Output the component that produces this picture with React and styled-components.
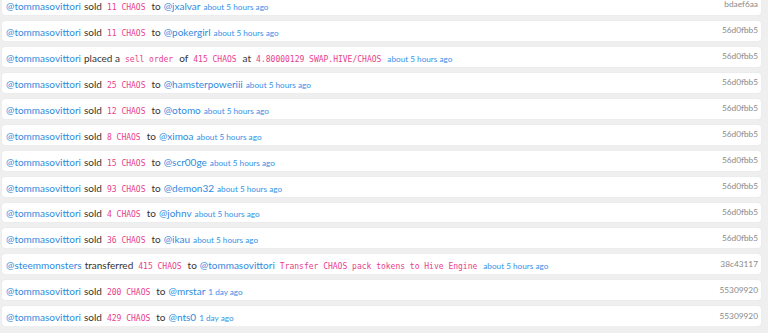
import React from 'react';
import styled, { createGlobalStyle } from 'styled-components';

const GlobalStyle = createGlobalStyle`
    body {
        margin: 0;
        background: #efefef;
        font-family: Lato, "Open Sans", sans-serif;
        overflow: hidden;
    }
`;

const Feed = styled.div`
    display: flex;
    flex-direction: column;
    gap: 6px;
    padding: 0 7px 0 2px;
    margin-top: -5px;
`;

const Card = styled.div`
    background: #fff;
    border-radius: 3px;
    box-shadow: 0 0 1px rgba(0, 0, 0, 0.12);
    height: 19.95px;
    display: flex;
    align-items: center;
    padding: 0 3px 0 4px;
    font-size: 10px;
    color: #333;
    white-space: nowrap;
`;

const Line = styled.div`
    display: flex;
    align-items: baseline;
    margin-top: 2px;
`;

const User = styled.span`
    color: #2f8ae0;
    margin-left: ${p => (p.$first ? '0' : '3px')};
`;

const Word = styled.span`
    margin-left: 3px;
`;

const Code = styled.code`
    font-family: "DejaVu Sans Mono", "Liberation Mono", monospace;
    font-size: 8px;
    color: #e83e8c;
    margin: 0 3px 0 5px;
`;

const Time = styled.span`
    color: #3592e8;
    font-size: 8.2px;
    margin-left: 3px;
`;

const Hash = styled.span`
    margin-left: auto;
    margin-bottom: 1px;
    font-size: 8.3px;
    color: #8a8a8a;
`;

const rows = [
    { from: 'tommasovittori', parts: [['w', 'sold'], ['c', '11 CHAOS'], ['w', 'to'], ['u', 'jxalvar']], time: 'about 5 hours ago', hash: 'bdaef6aa' },
    { from: 'tommasovittori', parts: [['w', 'sold'], ['c', '11 CHAOS'], ['w', 'to'], ['u', 'pokergirl']], time: 'about 5 hours ago', hash: '56d0fbb5' },
    { from: 'tommasovittori', parts: [['w', 'placed a'], ['c', 'sell order'], ['w', 'of'], ['c', '415 CHAOS'], ['w', 'at'], ['c', '4.80000129 SWAP.HIVE/CHAOS']], time: 'about 5 hours ago', hash: '56d0fbb5' },
    { from: 'tommasovittori', parts: [['w', 'sold'], ['c', '25 CHAOS'], ['w', 'to'], ['u', 'hamsterpoweriii']], time: 'about 5 hours ago', hash: '56d0fbb5' },
    { from: 'tommasovittori', parts: [['w', 'sold'], ['c', '12 CHAOS'], ['w', 'to'], ['u', 'otomo']], time: 'about 5 hours ago', hash: '56d0fbb5' },
    { from: 'tommasovittori', parts: [['w', 'sold'], ['c', '8 CHAOS'], ['w', 'to'], ['u', 'ximoa']], time: 'about 5 hours ago', hash: '56d0fbb5' },
    { from: 'tommasovittori', parts: [['w', 'sold'], ['c', '15 CHAOS'], ['w', 'to'], ['u', 'scr00ge']], time: 'about 5 hours ago', hash: '56d0fbb5' },
    { from: 'tommasovittori', parts: [['w', 'sold'], ['c', '93 CHAOS'], ['w', 'to'], ['u', 'demon32']], time: 'about 5 hours ago', hash: '56d0fbb5' },
    { from: 'tommasovittori', parts: [['w', 'sold'], ['c', '4 CHAOS'], ['w', 'to'], ['u', 'johnv']], time: 'about 5 hours ago', hash: '56d0fbb5' },
    { from: 'tommasovittori', parts: [['w', 'sold'], ['c', '36 CHAOS'], ['w', 'to'], ['u', 'ikau']], time: 'about 5 hours ago', hash: '56d0fbb5' },
    { from: 'steemmonsters', parts: [['w', 'transferred'], ['c', '415 CHAOS'], ['w', 'to'], ['u', 'tommasovittori'], ['c', 'Transfer CHAOS pack tokens to Hive Engine']], time: 'about 5 hours ago', hash: '38c43117' },
    { from: 'tommasovittori', parts: [['w', 'sold'], ['c', '200 CHAOS'], ['w', 'to'], ['u', 'mrstar']], time: '1 day ago', hash: '55309920' },
    { from: 'tommasovittori', parts: [['w', 'sold'], ['c', '429 CHAOS'], ['w', 'to'], ['u', 'nts0']], time: '1 day ago', hash: '55309920' },
];

const Part = ({ kind, text }) => {
    if (kind === 'c') return <Code>{text}</Code>;
    if (kind === 'u') return <User>@{text}</User>;
    return <Word>{text}</Word>;
};

const App = () => {
    return (
        <>
            <GlobalStyle />
            <Feed>
                {rows.map((r, i) => (
                    <Card key={i}>
                        <Line>
                            <User $first>@{r.from}</User>
                            {r.parts.map(([k, t], j) => <Part key={j} kind={k} text={t} />)}
                            <Time>{r.time}</Time>
                        </Line>
                        <Hash>{r.hash}</Hash>
                    </Card>
                ))}
            </Feed>
        </>
    );
};

export default App;
